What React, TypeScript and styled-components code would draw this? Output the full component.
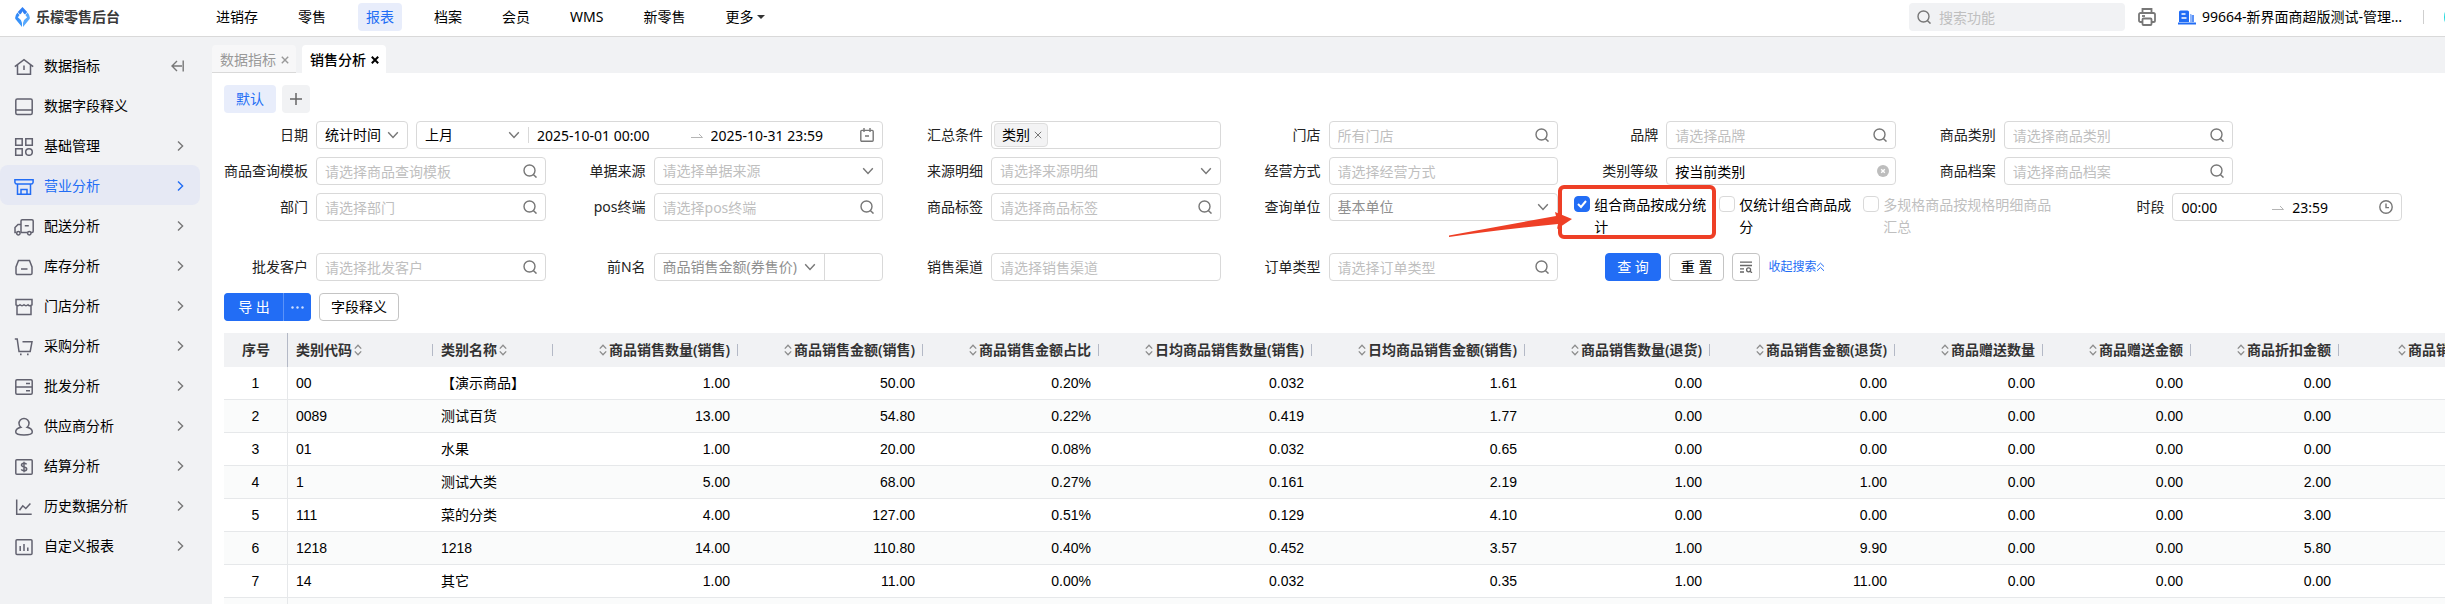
import React, { useState } from 'react';
import styled, { createGlobalStyle, css } from 'styled-components';

const BLUE = '#226df5';
const LINE = '#d9d9d9';
const PANEL = '#f1f2f4';
const MUTED = '#bfbfbf';
const ICON = '#777777';

const GlobalStyle = createGlobalStyle`
  *, *::before, *::after { box-sizing: border-box; }
  body {
    margin: 0;
    overflow: hidden;
    background: #fff;
    color: #000;
    font: 14px/22px 'Noto Sans', 'Noto Sans CJK SC', sans-serif;
  }
  button, input, select { font: inherit; color: inherit; margin: 0; }
  svg { display: block; flex: none; }
`;

/* ---------- shell ---------- */

const Shell = styled.div`
  display: flex;
  flex-direction: column;
  height: 100vh;
  overflow: hidden;
`;

const Header = styled.header`
  display: flex;
  flex: none;
  align-items: center;
  padding: 3px 0 5px 15px;
  border-bottom: 1px solid ${LINE};
  overflow: hidden;
`;

const Brand = styled.div`
  display: flex;
  align-items: center;
  gap: 6px;
  width: 193px;
  flex: none;
  font-weight: 700;
  color: #3a3a3a;
`;

const Nav = styled.nav`
  display: flex;
  gap: 24px;
`;

const NavItem = styled.a<{ $active?: boolean }>`
  display: flex;
  align-items: center;
  gap: 4px;
  height: 28px;
  padding: 0 8px;
  border-radius: 4px;
  white-space: nowrap;
  text-decoration: none;
  color: ${(p) => (p.$active ? BLUE : '#000')};
  background: ${(p) => (p.$active ? '#e8edfb' : 'transparent')};
`;

const HeaderTools = styled.div`
  display: flex;
  align-items: center;
  margin-left: auto;
  flex: none;
`;

const GlobalSearch = styled.label`
  display: flex;
  align-items: center;
  gap: 8px;
  width: 216px;
  height: 28px;
  padding: 0 8px;
  border-radius: 4px;
  background: ${PANEL};
  color: ${ICON};
`;

const BareInput = styled.input`
  flex: 1 1 0;
  min-width: 0;
  width: 0;
  height: 100%;
  padding: 0;
  border: 0;
  outline: 0;
  background: transparent;
  color: #000;
  &::placeholder { color: ${MUTED}; opacity: 1; }
`;

const IconButton = styled.button`
  display: flex;
  padding: 0;
  border: 0;
  background: none;
  color: ${ICON};
`;

const PrintButton = styled(IconButton)`
  margin: 0 22px 0 13px;
`;

const Tenant = styled.div`
  display: flex;
  align-items: center;
  gap: 6px;
`;

const TenantName = styled.span`
  width: 204px;
  overflow: hidden;
  white-space: nowrap;
  text-overflow: ellipsis;
`;

const Separator = styled.span`
  width: 1px;
  height: 14px;
  margin: 0 20px 0 17px;
  background: #cfcfcf;
`;

const Avatar = styled.span`
  width: 28px;
  height: 28px;
  margin-right: -27px;
  border-radius: 50%;
  background: #22d9dd;
`;

const Body = styled.div`
  display: flex;
  flex: 1;
  min-height: 0;
`;

const Sidebar = styled.aside`
  width: 212px;
  flex: none;
  padding: 8px 12px 0 0;
  background: ${PANEL};
`;

const MenuItem = styled.a<{ $active?: boolean }>`
  display: flex;
  align-items: center;
  height: 40px;
  padding: 2px 16px 0 14px;
  border-radius: 8px;
  text-decoration: none;
  color: ${(p) => (p.$active ? BLUE : '#000')};
  background: ${(p) => (p.$active ? '#e6e9f4' : 'transparent')};
  > svg:first-child { color: ${(p) => (p.$active ? BLUE : '#62626f')}; }
  > svg:last-child { color: ${(p) => (p.$active ? BLUE : ICON)}; }
`;

const MenuText = styled.span`
  flex: 1;
  padding-left: 10px;
`;

const Main = styled.main`
  display: flex;
  flex-direction: column;
  flex: 1;
  min-width: 0;
`;

const Tabs = styled.div`
  display: flex;
  flex: none;
  gap: 6px;
  padding-top: 8px;
  background: ${PANEL};
`;

const Tab = styled.button<{ $active?: boolean }>`
  display: flex;
  align-items: center;
  gap: 5px;
  height: 28px;
  padding: 2px 7px 0 8px;
  border: 0;
  border-bottom: 1px solid ${(p) => (p.$active ? '#fff' : LINE)};
  border-radius: 4px 4px 0 0;
  background: ${(p) => (p.$active ? '#fff' : '#f7f7f8')};
  color: ${(p) => (p.$active ? '#000' : '#999')};
  font-weight: ${(p) => (p.$active ? 500 : 400)};
`;

const Panel = styled.section`
  display: flex;
  flex-direction: column;
  gap: 12px;
  flex: 1;
  min-height: 0;
  padding: 12px 0 0 12px;
  background: #fff;
  overflow: hidden;
`;

const Row = styled.div<{ $gap: number }>`
  display: flex;
  flex: none;
  align-items: center;
  gap: ${(p) => p.$gap}px;
`;

const Chip = styled.button<{ $active?: boolean }>`
  display: flex;
  align-items: center;
  justify-content: center;
  height: 28px;
  padding: 0 ${(p) => (p.$active ? 12 : 8)}px;
  border: 0;
  border-radius: 4px;
  color: ${(p) => (p.$active ? BLUE : '#666')};
  background: ${(p) => (p.$active ? '#e8edfb' : PANEL)};
`;

/* ---------- filter form ---------- */

const Form = styled.form`
  display: grid;
  flex: none;
  grid-template-columns: repeat(13, minmax(0, 1fr));
  gap: 8px 16px;
  align-items: start;
  margin-top: -4px;
  padding-right: 43px;
`;

const FieldBox = styled.div<{ $span: number }>`
  grid-column: span ${(p) => p.$span};
  display: flex;
  align-items: center;
  gap: 8px;
  min-width: 0;
`;

const Label = styled.label`
  width: 84px;
  flex: none;
  text-align: right;
  white-space: nowrap;
  color: #222;
`;

const Control = styled.div<{ $width?: number }>`
  display: flex;
  align-items: center;
  height: 28px;
  min-width: 0;
  border: 1px solid ${LINE};
  border-radius: 4px;
  background: #fff;
  color: ${ICON};
  ${(p) => (p.$width ? css`flex: none; width: ${p.$width}px;` : css`flex: 1;`)}
`;

const TextInput = styled(BareInput)`
  padding-left: 8px;
`;

const TimeInput = styled(BareInput)`
  box-sizing: content-box;
  padding-left: 8px;
`;

const RangeArrow = styled.span`
  display: flex;
  padding: 2px 0 0 12px;
`;

const SelectWrap = styled.div<{ $width?: number; $divided?: boolean }>`
  position: relative;
  display: flex;
  align-items: center;
  height: 100%;
  min-width: 0;
  ${(p) => (p.$width ? css`flex: none; width: ${p.$width}px;` : css`flex: 1;`)}
  ${(p) => p.$divided && css`border-right: 1px solid ${LINE};`}
  > svg { position: absolute; right: 8px; pointer-events: none; }
`;

const NativeSelect = styled.select<{ $color: string }>`
  appearance: none;
  width: 100%;
  height: 100%;
  padding: 0 20px 0 8px;
  border: 0;
  outline: 0;
  background: transparent;
  color: ${(p) => p.$color};
`;

const ShortDivider = styled.span`
  width: 1px;
  height: 16px;
  background: ${LINE};
`;

const Suffix = styled.span`
  display: flex;
  padding: 0 8px;
`;

const ClearButton = styled(IconButton)`
  padding: 0 6px;
`;

const Tag = styled.span`
  display: flex;
  align-items: center;
  gap: 4px;
  height: 24px;
  margin-left: 2px;
  padding: 0 5px 0 7px;
  border: 1px solid #dedede;
  border-radius: 4px;
  background: #f3f3f4;
  color: #000;
`;

const CheckGroup = styled.div`
  grid-column: span 3;
  position: relative;
  display: flex;
  gap: 8px;
  padding: 1px 0 7px;
`;

const CheckLabel = styled.label<{ $width: number; $muted?: boolean }>`
  display: flex;
  align-items: flex-start;
  gap: 4px;
  flex: none;
  width: ${(p) => p.$width}px;
  color: ${(p) => (p.$muted ? MUTED : '#000')};
`;

const Checkbox = styled.input`
  appearance: none;
  flex: none;
  width: 16px;
  height: 16px;
  margin-top: 2px;
  border: 1px solid ${LINE};
  border-radius: 4px;
  background: #fff;
  &:checked {
    border-color: ${BLUE};
    background: ${BLUE} url("data:image/svg+xml,%3Csvg xmlns='http://www.w3.org/2000/svg' viewBox='0 0 14 14'%3E%3Cpath d='M3 7l3 3 5-6' fill='none' stroke='white' stroke-width='2'/%3E%3C/svg%3E") center / 14px no-repeat;
  }
`;

const CalloutMark = styled.svg`
  position: absolute;
  left: -126px;
  top: -10px;
  pointer-events: none;
`;

const FormActions = styled.div`
  grid-column: span 4;
  display: flex;
  align-items: center;
  gap: 8px;
  padding-left: 31px;
`;

const Button = styled.button<{ $primary?: boolean; $square?: boolean }>`
  display: flex;
  align-items: center;
  justify-content: center;
  height: 28px;
  padding: 0 ${(p) => (p.$square ? 5 : 11)}px;
  border: 1px solid ${(p) => (p.$primary ? BLUE : '#c4c4c4')};
  border-radius: 4px;
  white-space: nowrap;
  color: ${(p) => (p.$primary ? '#fff' : '#000')};
  background: ${(p) => (p.$primary ? BLUE : '#fff')};
`;

const CollapseLink = styled.a`
  display: flex;
  align-items: center;
  font-size: 12px;
  text-decoration: none;
  color: ${BLUE};
`;

const SplitButton = styled.div`
  display: flex;
  > button:first-child { width: 60px; border-radius: 4px 0 0 4px; border-right-color: #5b93f8; }
  > button:last-child { width: 27px; padding: 0; border-left: 0; border-radius: 0 4px 4px 0; }
`;

/* ---------- table ---------- */

const TableWrap = styled.div`
  flex: 1;
  min-height: 0;
  overflow: hidden;
`;

const Table = styled.table`
  width: 2276px;
  table-layout: fixed;
  border-collapse: separate;
  border-spacing: 0;
`;

const Th = styled.th<{ $align: Align }>`
  height: 34px;
  padding: 0 8px;
  font-weight: 600;
  text-align: ${(p) => p.$align};
  white-space: nowrap;
  color: #333;
  background: ${PANEL} linear-gradient(#b4b9c6, #b4b9c6) right center / 1px 12px no-repeat;
  &:first-child { background-size: 1px 100%; }
`;

const ThInner = styled.span<{ $align: Align }>`
  display: flex;
  align-items: center;
  gap: 2px;
  justify-content: ${(p) => ({ left: 'flex-start', right: 'flex-end', center: 'center' })[p.$align]};
`;

const Tr = styled.tr`
  &:nth-child(even) { background: #fafbfb; }
`;

const Td = styled.td<{ $align: Align }>`
  height: 33px;
  padding: 0 8px;
  border-bottom: 1px solid #e6e8ea;
  font-family: 'Liberation Sans', 'Noto Sans CJK SC', sans-serif;
  text-align: ${(p) => p.$align};
  white-space: nowrap;
  &:first-child { border-right: 1px solid #e6e8ea; }
`;

/* ---------- icons ---------- */

type IconProps = { children: React.ReactNode; size?: number; w?: number; h?: number; sw?: number };

const Svg = ({ children, size = 14, w, h, sw = 1.4 }: IconProps) => (
  <svg
    width={w ?? size}
    height={h ?? size}
    viewBox={`0 0 ${w ?? size} ${h ?? size}`}
    fill="none"
    stroke="currentColor"
    strokeWidth={sw}
    aria-hidden="true"
  >
    {children}
  </svg>
);

const SearchIcon = () => (
  <Svg><circle cx="6.5" cy="6.5" r="5.5" /><path d="M10.3 10.5L13.5 13.6" /></Svg>
);
const DownIcon = () => (
  <Svg w={12} h={8}><path d="M1.2 1.2L6 6.4l4.8-5.2" /></Svg>
);
const RightIcon = () => (
  <Svg w={7} h={12}><path d="M1 1.5L5.6 6 1 10.5" /></Svg>
);
const CloseIcon = ({ sw = 1.4 }: { sw?: number }) => (
  <Svg size={8} sw={sw}><path d="M.8.8l6.4 6.4M7.2.8L.8 7.2" /></Svg>
);
const ArrowIcon = () => (
  <RangeArrow>
    <Svg w={12} h={6} sw={1}><g stroke="#b5b5b5"><path d="M0 4.5h11.5L8 1" /></g></Svg>
  </RangeArrow>
);
const CalendarIcon = () => (
  <Svg><rect x=".8" y="2.4" width="12.4" height="10.8" rx="1" /><path d="M4 0v4M10 0v4M5 8h4" /></Svg>
);
const ClockIcon = () => (
  <Svg><circle cx="7" cy="7" r="6.2" /><path d="M7 3.4V7.6H10" /></Svg>
);
const ClearIcon = () => (
  <Svg size={12}>
    <circle cx="6" cy="6" r="6" fill="#bdbdbd" stroke="none" />
    <path d="M4.2 4.2l3.6 3.6M7.8 4.2L4.2 7.8" stroke="#fff" />
  </Svg>
);
const SortIcon = () => (
  <Svg w={8} h={12} sw={1.3}><g stroke="#8c8c8c"><path d="M.8 4.6L4 1.2l3.2 3.4M.8 7.4L4 10.800l3.200-3.400" /></g></Svg>
);
const PlusIcon = () => <Svg size={12} sw={1.5}><path d="M6 0v12M0 6h12" /></Svg>;
const CollapseIcon = () => (
  <Svg w={13} h={12}><path d="M6 1L1 6l5 5M1 6h10M12.2 .5v11" /></Svg>
);
const ViewListIcon = () => (
  <Svg w={16} h={12} sw={1.3}>
    <g stroke="#666">
      <path d="M2 1.200h12M2 4.500h12M2 7.800h4M2 11h4" />
      <circle cx="10.600" cy="8.800" r="2" />
      <path d="M12 10.200l2 1.600" />
    </g>
  </Svg>
);
const DoubleUpIcon = () => (
  <Svg w={9} h={10} sw={1}><path d="M1 4.6l3.5-3.4L8 4.6M1 8.8l3.5-3.4L8 8.8" /></Svg>
);
const CaretIcon = () => (
  <svg width="8" height="4" viewBox="0 0 8 4" aria-hidden="true"><path d="M0 0h8L4 4z" fill="#333" /></svg>
);
const MoreIcon = () => (
  <svg width="13" height="3" viewBox="0 0 13 3" fill="#cfe0ff" aria-hidden="true">
    <circle cx="1.5" cy="1.5" r="1.2" /><circle cx="6.5" cy="1.5" r="1.2" /><circle cx="11.5" cy="1.5" r="1.2" />
  </svg>
);
const PrinterIcon = () => (
  <Svg w={18} h={18} sw={1.8}>
    <path d="M4.5 5V1h9v4M4 14H2.6A1.6 1.6 0 0 1 1 12.400V6.600A1.600 1.600 0 0 1 2.600 5h12.800A1.600 1.600 0 0 1 17 6.600v5.800a1.600 1.600 0 0 1-1.600 1.600H14" />
    <rect x="4.500" y="10.500" width="9" height="6.500" rx="1" />
    <path d="M4 8h3" />
  </Svg>
);
const TenantIcon = () => (
  <svg width="18" height="15" viewBox="0 0 18 15" aria-hidden="true">
    <path d="M1 2a1.500 1.500 0 0 1 1.500-1.500h7A1.500 1.500 0 0 1 11 2v10H1z" fill={BLUE} />
    <path d="M3.500 4h4M3.500 8h5" stroke="#fff" strokeWidth="1.400" />
    <path d="M12 4h1.500v8H12z" fill="#8db4fa" />
    <path d="M13.500 5h2.500v7h-2.500z" fill="#5a92f8" />
    <path d="M0 12.500h18v2H0z" fill={BLUE} />
  </svg>
);
const LogoIcon = () => (
  <svg width="15" height="20" viewBox="0 0 15 20" aria-hidden="true">
    <defs>
      <linearGradient id="brand" x1="0" y1="0" x2="1" y2="1">
        <stop offset="0" stopColor="#2f86f6" /><stop offset="1" stopColor="#3f9bfb" />
      </linearGradient>
    </defs>
    <path d="M7.500 0L12.200 5 10 7.600Q8.400 6.400 7.500 4.200 6.600 6.400 5 7.600L2.800 5z" fill="#2f80f5" />
    <path d="M2.400 5.600L4.600 8Q3.800 9.400 2.800 10.200 6.200 12.200 7 16v4L.4 12Q-.6 9.600 2.400 5.600z" fill="url(#brand)" />
    <path d="M12.600 5.600L10.400 8q.8 1.400 1.800 2.200Q8.800 12.200 8 16v4l6.600-8q1-2.400-2-6.400z" fill="#57a8fc" />
  </svg>
);

const MENU_ICONS: Record<string, React.ReactNode> = {
  home: <path d="M.8 10.600L10 3.600l9.200 7M3.500 9v9.200h13V9M10 9.500v4.500" />,
  book: <><rect x="1.800" y="3" width="16.400" height="15.600" rx="1.500" /><path d="M2 14h16" /></>,
  grid: <><path d="M1.700 2.700h6.500v6.500H1.700zM11.800 2.700h6.500v6.500h-6.500zM1.700 12.700h6.500v6.500H1.700z" /><circle cx="15" cy="16" r="3.300" /></>,
  stall: <path d="M.9 3.800h18.200v2.600a2 2 0 0 1-2 1.600H2.900a2 2 0 0 1-2-1.600zM3.500 8v10.200h13V8M7 18v-4.500h6V18" />,
  truck: <><path d="M7 16.500V5a1.200 1.200 0 0 1 1.200-1.200H18A1.200 1.200 0 0 1 19.200 5v10.300A1.200 1.200 0 0 1 18 16.500h-1M13.500 16.500h-7M7 8.500H4L1 11.500v5h1.300M10.800 9.800h4" /><circle cx="4.400" cy="17.200" r="1.700" /><circle cx="15.300" cy="17.200" r="1.700" /></>,
  box: <path d="M4.500 4.500h11L18 11v6.200a1.300 1.300 0 0 1-1.300 1.300H3.300A1.300 1.300 0 0 1 2 17.200V11zM7 13h6.500" />,
  shop: <path d="M2 3.600h16v5.200q-2.600 1.800-4 0-2 1.800-4 0-2 1.800-4 0-1.800 1.800-4 0zM3 10v8.500h14V10" />,
  cart: <><path d="M.8 3h2.400l1.800 12.500h11.200L18 5.800H8.500" /><path d="M6 18.300h1.600M13 18.300h1.600" strokeWidth="1.800" /></>,
  server: <path d="M3 3.700h14a1.200 1.200 0 0 1 1.200 1.200v12.200a1.200 1.200 0 0 1-1.200 1.200H3a1.200 1.200 0 0 1-1.200-1.200V4.900A1.200 1.200 0 0 1 3 3.700zM1.800 11h16.400M12 7.400h4M12 14.700h4" />,
  user: <path d="M6.900 11.300a5 5 0 1 1 6.200 0c3 .7 5.200 2.600 5.200 4.700 0 2-3 3-8.300 3s-8.300-1-8.300-3c0-2.100 2.200-4 5.200-4.700z" />,
  money: <><rect x="1.800" y="3.700" width="16.400" height="14.600" rx="1" /><path d="M12.600 8.400C12 7.500 11 7.300 10 7.300c-1.400 0-2.500.6-2.500 1.800 0 2.600 5.200 1.200 5.200 3.800 0 1.200-1.200 1.800-2.700 1.800-1.200 0-2.200-.4-2.700-1.300M10 5.800v10.400" /></>,
  trend: <path d="M2.700 3.500v14.800h15M5.500 14.200l3.300-4.400 3 2.700 4.600-5" />,
  report: <><rect x="2" y="3.700" width="16" height="14.800" rx="1" /><path d="M6.200 10v5M10 8v7M13.800 11.500V15" /></>,
};

/* ---------- reusable controls ---------- */

const Field = ({ label, id, span = 2, children }: { label: string; id: string; span?: number; children: React.ReactNode }) => (
  <FieldBox $span={span}>
    <Label htmlFor={id}>{label}</Label>
    {children}
  </FieldBox>
);

const LookupField = ({ label, id, placeholder, search = true }: { label: string; id: string; placeholder: string; search?: boolean }) => (
  <Field label={label} id={id}>
    <Control>
      <TextInput id={id} placeholder={placeholder} />
      {search && <Suffix><SearchIcon /></Suffix>}
    </Control>
  </Field>
);

type PickProps = { id: string; text: string; color?: string; width?: number; divided?: boolean; name?: string };

const Pick = ({ id, text, color = '#000', width, divided, name }: PickProps) => (
  <SelectWrap $width={width} $divided={divided}>
    <NativeSelect id={id} $color={color} aria-label={name}>
      <option>{text}</option>
    </NativeSelect>
    <DownIcon />
  </SelectWrap>
);

/* ---------- data ---------- */

const NAV = ['进销存', '零售', '报表', '档案', '会员', 'WMS', '新零售'];

const MENU: [string, string][] = [
  ['home', '数据指标'],
  ['book', '数据字段释义'],
  ['grid', '基础管理'],
  ['stall', '营业分析'],
  ['truck', '配送分析'],
  ['box', '库存分析'],
  ['shop', '门店分析'],
  ['cart', '采购分析'],
  ['server', '批发分析'],
  ['user', '供应商分析'],
  ['money', '结算分析'],
  ['trend', '历史数据分析'],
  ['report', '自定义报表'],
];

type Align = 'left' | 'right' | 'center';

const COLUMNS: { title: string; width: number; align: Align }[] = [
  { title: '序号', width: 64, align: 'center' },
  { title: '类别代码', width: 145, align: 'left' },
  { title: '类别名称', width: 120, align: 'left' },
  { title: '商品销售数量(销售)', width: 185, align: 'right' },
  { title: '商品销售金额(销售)', width: 185, align: 'right' },
  { title: '商品销售金额占比', width: 176, align: 'right' },
  { title: '日均商品销售数量(销售)', width: 213, align: 'right' },
  { title: '日均商品销售金额(销售)', width: 213, align: 'right' },
  { title: '商品销售数量(退货)', width: 185, align: 'right' },
  { title: '商品销售金额(退货)', width: 185, align: 'right' },
  { title: '商品赠送数量', width: 148, align: 'right' },
  { title: '商品赠送金额', width: 148, align: 'right' },
  { title: '商品折扣金额', width: 148, align: 'right' },
  { title: '商品销售成本', width: 161, align: 'right' },
];

const ROWS: string[][] = [
  ['1', '00', '【演示商品】', '1.00', '50.00', '0.20%', '0.032', '1.61', '0.00', '0.00', '0.00', '0.00', '0.00', ''],
  ['2', '0089', '测试百货', '13.00', '54.80', '0.22%', '0.419', '1.77', '0.00', '0.00', '0.00', '0.00', '0.00', ''],
  ['3', '01', '水果', '1.00', '20.00', '0.08%', '0.032', '0.65', '0.00', '0.00', '0.00', '0.00', '0.00', ''],
  ['4', '1', '测试大类', '5.00', '68.00', '0.27%', '0.161', '2.19', '1.00', '1.00', '0.00', '0.00', '2.00', ''],
  ['5', '111', '菜的分类', '4.00', '127.00', '0.51%', '0.129', '4.10', '0.00', '0.00', '0.00', '0.00', '3.00', ''],
  ['6', '1218', '1218', '14.00', '110.80', '0.40%', '0.452', '3.57', '1.00', '9.90', '0.00', '0.00', '5.80', ''],
  ['7', '14', '其它', '1.00', '11.00', '0.00%', '0.032', '0.35', '1.00', '11.00', '0.00', '0.00', '0.00', ''],
  COLUMNS.map(() => ''),
];

/* ---------- page ---------- */

const Filters = () => {
  const [byPart, setByPart] = useState(true);
  return (
    <Form onSubmit={(e) => e.preventDefault()}>
      <Field label="日期" id="dateKind" span={4}>
        <Control $width={92}><Pick id="dateKind" text="统计时间" /></Control>
        <Control>
          <Pick id="period" name="日期区间" text="上月" width={111} />
          <ShortDivider />
          <TimeInput aria-label="开始日期" defaultValue="2025-10-01 00:00" />
          <ArrowIcon />
          <TimeInput aria-label="结束日期" defaultValue="2025-10-31 23:59" />
          <Suffix><CalendarIcon /></Suffix>
        </Control>
      </Field>
      <Field label="汇总条件" id="groupBy">
        <Control>
          <Tag>类别<IconButton type="button" aria-label="移除"><CloseIcon sw={1} /></IconButton></Tag>
          <TextInput id="groupBy" />
        </Control>
      </Field>
      <LookupField label="门店" id="store" placeholder="所有门店" />
      <LookupField label="品牌" id="brandName" placeholder="请选择品牌" />
      <LookupField label="商品类别" id="category" placeholder="请选择商品类别" />

      <LookupField label="商品查询模板" id="template" placeholder="请选择商品查询模板" />
      <Field label="单据来源" id="source">
        <Control><Pick id="source" text="请选择单据来源" color={MUTED} /></Control>
      </Field>
      <Field label="来源明细" id="sourceDetail">
        <Control><Pick id="sourceDetail" text="请选择来源明细" color={MUTED} /></Control>
      </Field>
      <LookupField label="经营方式" id="mode" placeholder="请选择经营方式" search={false} />
      <Field label="类别等级" id="level">
        <Control>
          <TextInput id="level" defaultValue="按当前类别" />
          <ClearButton type="button" aria-label="清除"><ClearIcon /></ClearButton>
        </Control>
      </Field>
      <LookupField label="商品档案" id="goods" placeholder="请选择商品档案" />

      <LookupField label="部门" id="dept" placeholder="请选择部门" />
      <LookupField label="pos终端" id="pos" placeholder="请选择pos终端" />
      <LookupField label="商品标签" id="label" placeholder="请选择商品标签" />
      <Field label="查询单位" id="unit">
        <Control><Pick id="unit" text="基本单位" color="#8f8f8f" /></Control>
      </Field>
      <CheckGroup>
        <CheckLabel $width={137}>
          <Checkbox type="checkbox" checked={byPart} onChange={() => setByPart(!byPart)} />
          组合商品按成分统计
        </CheckLabel>
        <CheckLabel $width={136}>
          <Checkbox type="checkbox" />
          仅统计组合商品成分
        </CheckLabel>
        <CheckLabel $width={200} $muted>
          <Checkbox type="checkbox" disabled />
          多规格商品按规格明细商品汇总
        </CheckLabel>
        <CalloutMark width="270" height="58" viewBox="0 0 270 58" aria-hidden="true">
          <rect x="112" y="4" width="154" height="50" rx="4" fill="none" stroke="#ee3f26" strokeWidth="4" />
          <path d="M1 52.500L108 33l-1-4 17 7L109 46l1-5Q50 47 1 54z" fill="#ee3f26" />
        </CalloutMark>
      </CheckGroup>
      <Field label="时段" id="timeFrom">
        <Control>
          <TimeInput id="timeFrom" defaultValue="00:00" />
          <ArrowIcon />
          <TimeInput aria-label="结束时段" defaultValue="23:59" />
          <Suffix><ClockIcon /></Suffix>
        </Control>
      </Field>

      <LookupField label="批发客户" id="customer" placeholder="请选择批发客户" />
      <Field label="前N名" id="rankBy">
        <Control>
          <Pick id="rankBy" text="商品销售金额(券售价)" color="#8f8f8f" width={170} divided />
          <TextInput aria-label="名次" />
        </Control>
      </Field>
      <LookupField label="销售渠道" id="channel" placeholder="请选择销售渠道" search={false} />
      <LookupField label="订单类型" id="orderType" placeholder="请选择订单类型" />
      <FormActions>
        <Button type="submit" $primary>查 询</Button>
        <Button type="reset">重 置</Button>
        <Button type="button" $square aria-label="查询设置"><ViewListIcon /></Button>
        <CollapseLink href="#collapse">收起搜索<DoubleUpIcon /></CollapseLink>
      </FormActions>
    </Form>
  );
};

const App = () => (
  <Shell>
    <GlobalStyle />
    <Header>
      <Brand><LogoIcon />乐檬零售后台</Brand>
      <Nav>
        {NAV.map((n) => (
          <NavItem key={n} href="#nav" $active={n === '报表'}>{n}</NavItem>
        ))}
        <NavItem href="#more">更多<CaretIcon /></NavItem>
      </Nav>
      <HeaderTools>
        <GlobalSearch>
          <SearchIcon />
          <BareInput aria-label="搜索功能" placeholder="搜索功能" />
        </GlobalSearch>
        <PrintButton aria-label="打印"><PrinterIcon /></PrintButton>
        <Tenant>
          <TenantIcon />
          <TenantName>99664-新界面商超版测试-管理中心</TenantName>
        </Tenant>
        <Separator />
        <Avatar />
      </HeaderTools>
    </Header>
    <Body>
      <Sidebar>
        {MENU.map(([icon, text], i) => (
          <MenuItem key={text} href="#menu" $active={icon === 'stall'}>
            <Svg size={20} sw={1.5}>{MENU_ICONS[icon]}</Svg>
            <MenuText>{text}</MenuText>
            {i === 0 ? <CollapseIcon /> : i > 1 && <RightIcon />}
          </MenuItem>
        ))}
      </Sidebar>
      <Main>
        <Tabs>
          <Tab>数据指标<CloseIcon /></Tab>
          <Tab $active>销售分析<CloseIcon sw={2} /></Tab>
        </Tabs>
        <Panel>
          <Row $gap={6}>
            <Chip $active>默认</Chip>
            <Chip aria-label="新增"><PlusIcon /></Chip>
          </Row>
          <Filters />
          <Row $gap={8}>
            <SplitButton>
              <Button $primary>导 出</Button>
              <Button $primary aria-label="更多导出"><MoreIcon /></Button>
            </SplitButton>
            <Button>字段释义</Button>
          </Row>
          <TableWrap>
            <Table>
              <colgroup>
                {COLUMNS.map((c) => <col key={c.title} style={{ width: c.width }} />)}
              </colgroup>
              <thead>
                <tr>
                  {COLUMNS.map((c) => (
                    <Th key={c.title} $align={c.align}>
                      <ThInner $align={c.align}>
                        {c.align === 'right' && <SortIcon />}
                        {c.title}
                        {c.align === 'left' && <SortIcon />}
                      </ThInner>
                    </Th>
                  ))}
                </tr>
              </thead>
              <tbody>
                {ROWS.map((r, i) => (
                  <Tr key={i}>
                    {r.map((v, j) => <Td key={j} $align={COLUMNS[j].align}>{v}</Td>)}
                  </Tr>
                ))}
              </tbody>
            </Table>
          </TableWrap>
        </Panel>
      </Main>
    </Body>
  </Shell>
);

export default App;
